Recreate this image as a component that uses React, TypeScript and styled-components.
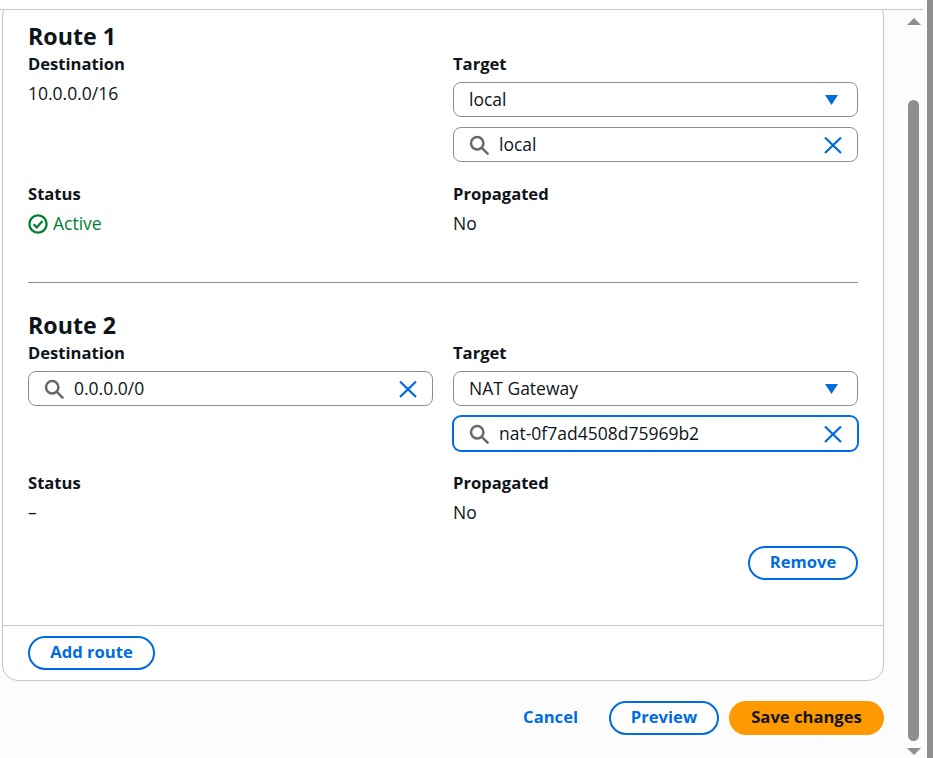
import React from 'react';
import styled, { createGlobalStyle } from 'styled-components';

const GlobalStyle = createGlobalStyle`
  html, body {
    margin: 0;
    padding: 0;
    height: 100%;
    overflow: hidden;
    background: #fcfcfc;
  }
  * { box-sizing: border-box; }
`;

const SearchIcon = () => (
  <Icon viewBox="0 0 20 20" fill="none" stroke="#656871" strokeWidth="2.5">
    <circle cx="8.2" cy="8.2" r="6.2" />
    <path d="M12.8 12.8l5.8 5.8" strokeLinecap="round" />
  </Icon>
);

const ClearIcon = () => (
  <Icon viewBox="0 0 20 20" fill="none" stroke="#006ce0" strokeWidth="2.3">
    <path d="M2 2.5l16 15.5M18 2.5L2 18" />
  </Icon>
);

const Caret = () => (
  <CaretIcon viewBox="0 0 13 10">
    <path d="M0 0h13L6.5 10z" fill="#006ce0" />
  </CaretIcon>
);

const SearchField = ({ value, focused }: { value: string; focused?: boolean }) => (
  <SearchBox $focused={focused}>
    <SearchIcon />
    <SearchText>{value}</SearchText>
    <ClearIcon />
  </SearchBox>
);

const SelectField = ({ value }: { value: string }) => (
  <SelectBox>
    <FieldText>{value}</FieldText>
    <Caret />
  </SelectBox>
);

export default function App() {
  return (
    <>
      <GlobalStyle />
      <Page>
        <Main>
          <TopBar />
          <Card>
            <Route>
              <RouteTitle>Route 1</RouteTitle>
              <RouteGrid>
                <Field>
                  <Label>Destination</Label>
                  <Value>10.0.0.0/16</Value>
                </Field>
                <Field>
                  <Label>Target</Label>
                  <Controls>
                    <SelectField value="local" />
                    <SearchField value="local" />
                  </Controls>
                </Field>
                <Field>
                  <Label>Status</Label>
                  <Value>
                    <ActiveStatus>
                      <StatusIcon viewBox="0 0 20 20" fill="none" stroke="#00802f" strokeWidth="2.3">
                        <circle cx="10" cy="10" r="8.6" />
                        <path d="M5.6 10.2l3.2 3.2 5.6-6.4" />
                      </StatusIcon>
                      Active
                    </ActiveStatus>
                  </Value>
                </Field>
                <Field>
                  <Label>Propagated</Label>
                  <Value>No</Value>
                </Field>
              </RouteGrid>
            </Route>
            <Divider />
            <Route $second>
              <RouteTitle>Route 2</RouteTitle>
              <RouteGrid>
                <Field>
                  <Label>Destination</Label>
                  <Controls>
                    <SearchField value="0.0.0.0/0" />
                  </Controls>
                </Field>
                <Field>
                  <Label>Target</Label>
                  <Controls>
                    <SelectField value="NAT Gateway" />
                    <SearchField value="nat-0f7ad4508d75969b2" focused />
                  </Controls>
                </Field>
                <Field>
                  <Label>Status</Label>
                  <Value>–</Value>
                </Field>
                <Field>
                  <Label>Propagated</Label>
                  <Value>No</Value>
                </Field>
              </RouteGrid>
              <RemoveRow>
                <Button $width={110}>Remove</Button>
              </RemoveRow>
            </Route>
            <CardFooter>
              <Button $width={127}>Add route</Button>
            </CardFooter>
          </Card>
          <Actions>
            <LinkButton>Cancel</LinkButton>
            <Button $width={110}>Preview</Button>
            <PrimaryButton>Save changes</PrimaryButton>
          </Actions>
        </Main>
        <ScrollTrack>
          <ArrowUp />
          <Thumb />
          <ArrowDown />
        </ScrollTrack>
        <OuterBar />
      </Page>
    </>
  );
}

const Page = styled.div`
  display: flex;
  width: 933px;
  height: 758px;
  overflow: hidden;
  font-family: 'Open Sans', 'Noto Sans', sans-serif;
  font-size: 17.5px;
  line-height: 20px;
  color: #0f141a;
  background: #fcfcfc;
`;

const Main = styled.div`
  width: 906px;
  flex: none;
`;

const TopBar = styled.div`
  position: relative;
  z-index: 1;
  width: 923px;
  height: 10px;
  background: #fff;
  border-bottom: 1px solid #c6c6cd;
`;

const Card = styled.div`
  width: 882px;
  margin: -10px 0 0 2px;
  padding-top: 22px;
  background: #fff;
  border: 1px solid #c6c6cd;
  border-radius: 16px;
`;

const Route = styled.section<{ $second?: boolean }>`
  padding: 0 25px;
  margin-top: ${props => (props.$second ? '28px' : '-1px')};
`;

const RouteTitle = styled.h2`
  margin: 0 0 2px;
  padding-bottom: 2px;
  height: 30px;
  font-size: 23.2px;
  line-height: 28px;
  font-weight: 700;
`;

const RouteGrid = styled.div`
  display: grid;
  grid-template-columns: 405px 405px;
  column-gap: 20px;
  row-gap: 22px;
`;

const Field = styled.div`
  min-width: 0;
`;

const Label = styled.div`
  font-size: 16.6px;
  font-weight: 700;
`;

const Value = styled.div`
  margin-top: 9px;
  padding-bottom: 1px;
`;

const ActiveStatus = styled.span`
  display: flex;
  align-items: center;
  gap: 5px;
  color: #00802f;
`;

const StatusIcon = styled.svg`
  width: 20px;
  height: 20px;
  margin: 1px 0 -1px;
  flex: none;
`;

const Controls = styled.div`
  display: flex;
  flex-direction: column;
  gap: 10px;
  margin-top: 8px;
`;

const FieldText = styled.span`
  padding-bottom: 2px;
`;

const SelectBox = styled.div`
  display: flex;
  align-items: center;
  justify-content: space-between;
  height: 35px;
  padding: 0 19px 0 15px;
  border: 1px solid #8c8c94;
  border-radius: 8px;
  background: #fff;
`;

const SearchBox = styled.div<{ $focused?: boolean }>`
  display: flex;
  align-items: center;
  height: 35px;
  padding: 0 14px 0 15px;
  border: 1px solid #8c8c94;
  border-radius: 8px;
  background: #fff;
  ${props => props.$focused && 'border-color: #006ce0; box-shadow: 0 0 0 1px #006ce0;'}
`;

const SearchText = styled.span`
  flex: 1;
  margin-left: 10px;
  padding-bottom: 1px;
`;

const Icon = styled.svg`
  width: 20px;
  height: 20px;
  flex: none;
`;

const CaretIcon = styled.svg`
  width: 13px;
  height: 10px;
  flex: none;
`;

const Divider = styled.hr`
  height: 1px;
  margin: 48px 25px 0;
  border: 0;
  background: #8c8c94;
`;

const RemoveRow = styled.div`
  display: flex;
  justify-content: flex-end;
  margin-top: 23px;
`;

const CardFooter = styled.div`
  margin-top: 45px;
  padding: 10px 25px;
  border-top: 1px solid #c6c6cd;
`;

const Button = styled.button<{ $width: number }>`
  width: ${props => props.$width}px;
  height: 34px;
  padding: 0 0 2px;
  font: 700 16.6px/20px 'Open Sans', 'Noto Sans', sans-serif;
  color: #006ce0;
  background: #fff;
  border: 2px solid #006ce0;
  border-radius: 20px;
`;

const LinkButton = styled.button`
  padding: 0 0 2px;
  margin-right: 21px;
  font: 700 16.6px/20px 'Open Sans', 'Noto Sans', sans-serif;
  color: #006ce0;
  background: none;
  border: 0;
`;

const PrimaryButton = styled.button`
  width: 155px;
  height: 34px;
  padding: 0 0 2px;
  font: 700 16.6px/20px 'Open Sans', 'Noto Sans', sans-serif;
  color: #0f141a;
  background: #ff9900;
  border: 0;
  border-radius: 20px;
`;

const Actions = styled.div`
  display: flex;
  justify-content: flex-end;
  align-items: center;
  gap: 10px;
  width: 884px;
  margin-top: 20px;
`;

const ScrollTrack = styled.div`
  display: flex;
  flex-direction: column;
  align-items: center;
  width: 15px;
  padding-top: 18px;
`;

const ArrowUp = styled.div`
  width: 0;
  height: 0;
  border-left: 7px solid transparent;
  border-right: 7px solid transparent;
  border-bottom: 7px solid #8e8e8e;
`;

const Thumb = styled.div`
  width: 11px;
  height: 641px;
  margin-top: 75px;
  border-radius: 6px;
  background: #8e8e8e;
`;

const ArrowDown = styled.div`
  width: 0;
  height: 0;
  margin-top: 7px;
  border-left: 7px solid transparent;
  border-right: 7px solid transparent;
  border-top: 7px solid #8e8e8e;
`;

const OuterBar = styled.div`
  width: 6px;
  height: 758px;
  margin-left: 6px;
  background: #8e8e8e;
`;
